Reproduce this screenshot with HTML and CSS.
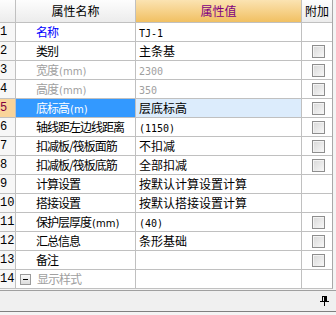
FILE: index.html
```html
<!DOCTYPE html>
<html>
<head>
<meta charset="utf-8">
<link rel="stylesheet" href="styles.css">
</head>
<body>
<div class="panel">
  <div class="grid">
    <div class="hd hd-num"></div>
    <div class="hd hd-name">属性名称</div>
    <div class="hd hd-val">属性值</div>
    <div class="hd hd-add">附加</div>

    <div class="num">1</div><div class="name blue">名称</div><div class="val"><span class="lat">TJ-1</span></div><div class="add"></div>
    <div class="num">2</div><div class="name">类别</div><div class="val">主条基</div><div class="add"><i class="cb"></i></div>
    <div class="num">3</div><div class="name gray">宽度<span class="unit">(mm)</span></div><div class="val gray"><span class="lat">2300</span></div><div class="add"><i class="cb"></i></div>
    <div class="num">4</div><div class="name gray">高度<span class="unit">(mm)</span></div><div class="val gray"><span class="lat">350</span></div><div class="add"><i class="cb"></i></div>
    <div class="num sel-num">5</div><div class="name sel-name">底标高<span class="unit">(m)</span></div><div class="val sel-val">层底标高</div><div class="add"><i class="cb"></i></div>
    <div class="num">6</div><div class="name">轴线距左边线距离</div><div class="val"><span class="lat">(1150)</span></div><div class="add"><i class="cb"></i></div>
    <div class="num">7</div><div class="name">扣减板/筏板面筋</div><div class="val">不扣减</div><div class="add"><i class="cb"></i></div>
    <div class="num">8</div><div class="name">扣减板/筏板底筋</div><div class="val">全部扣减</div><div class="add"><i class="cb"></i></div>
    <div class="num">9</div><div class="name">计算设置</div><div class="val">按默认计算设置计算</div><div class="add"></div>
    <div class="num">10</div><div class="name">搭接设置</div><div class="val">按默认搭接设置计算</div><div class="add"></div>
    <div class="num">11</div><div class="name">保护层厚度<span class="unit">(mm)</span></div><div class="val"><span class="lat">(40)</span></div><div class="add"><i class="cb"></i></div>
    <div class="num">12</div><div class="name">汇总信息</div><div class="val">条形基础</div><div class="add"><i class="cb"></i></div>
    <div class="num">13</div><div class="name">备注</div><div class="val"></div><div class="add"><i class="cb"></i></div>
    <div class="num">14</div><div class="name gray group"><i class="tog"></i>显示样式</div><div class="val"></div><div class="add"></div>
  </div>
  <div class="bar">
    <svg class="pin" width="9" height="10" viewBox="0 0 9 10">
      <rect x="2.5" y="0.5" width="4" height="5" fill="none" stroke="#000"/>
      <rect x="4" y="1" width="2" height="4" fill="#000"/>
      <rect x="0" y="5" width="9" height="1" fill="#000"/>
      <rect x="4" y="6" width="1" height="4" fill="#000"/>
    </svg>
  </div>
</div>
</body>
</html>
```

FILE: styles.css
```css
html, body {
  margin: 0;
  padding: 0;
  background: #f4f4f4;
}
body {
  width: 336px;
  height: 315px;
  overflow: hidden;
  font-family: "Noto Sans CJK SC", "Liberation Sans", sans-serif;
}
.panel {
  width: 336px;
}
.grid {
  display: grid;
  grid-template-columns: 15px 119px 165px 30px;
  grid-template-rows: 22px repeat(14, 18px);
  gap: 1px;
  width: 332px;
  background: #c0c0c0;
  border-right: 1px solid #a8a8a8;
  border-bottom: 1px solid #c0c0c0;
}
.grid > div {
  background: #fff;
  overflow: hidden;
  white-space: nowrap;
}
.hd {
  font-size: 12px;
  line-height: 22px;
  text-align: center;
  color: #000;
  background: linear-gradient(#fdfdfd, #ececec) !important;
}
.hd-val {
  color: #800080;
  background: linear-gradient(#fbe3b2, #f1c062) !important;
}
.num {
  font-family: "Liberation Mono", monospace;
  font-size: 12px;
  line-height: 18px;
  padding-left: 0;
  background: #f7f7f7 !important;
}
.name {
  font-size: 12px;
  line-height: 18px;
  padding-left: 20px;
  letter-spacing: -1px;
  color: #000;
}
.val {
  font-size: 12px;
  line-height: 18px;
  padding-left: 3px;
  color: #000;
}
.lat {
  font-family: "DejaVu Sans Mono", monospace;
  font-size: 10px;
  letter-spacing: 0;
}
.unit {
  font-family: "DejaVu Sans", sans-serif;
  font-size: 10px;
  letter-spacing: 0;
  margin-left: 1px;
}
.blue { color: #0000ff; }
.gray { color: #a0a0a0; }
.sel-num {
  background: #f9d49a !important;
  color: #800040;
}
.sel-name {
  background: #3399ff !important;
  color: #fff;
}
.sel-val {
  background: #dcecfc !important;
}
.add {
  display: flex;
  align-items: center;
  justify-content: center;
}
.cb {
  display: block;
  width: 11px;
  height: 11px;
  margin-left: 2px;
  border: 1px solid #8e8e8e;
  background: linear-gradient(135deg, #d8d8d8, #f8f8f8);
  box-shadow: inset 1px 1px 0 #f4f4f4;
}
.group {
  padding-left: 4px;
  display: flex;
  align-items: center;
}
.tog {
  display: block;
  position: relative;
  width: 9px;
  height: 9px;
  margin-right: 6px;
  border: 1px solid #9a9a9a;
  background: linear-gradient(#fafafa, #dcdcdc);
}
.tog::after {
  content: "";
  position: absolute;
  left: 2px;
  top: 4px;
  width: 5px;
  height: 1px;
  background: #000;
}
.bar {
  margin-top: 1px;
  height: 20px;
  border-top: 1px solid #a0a0a0;
  border-bottom: 1px solid #808080;
  background: #f0f0f0;
  display: flex;
  align-items: center;
  justify-content: flex-end;
  padding-right: 7px;
}
.pin {
  display: block;
}
```
